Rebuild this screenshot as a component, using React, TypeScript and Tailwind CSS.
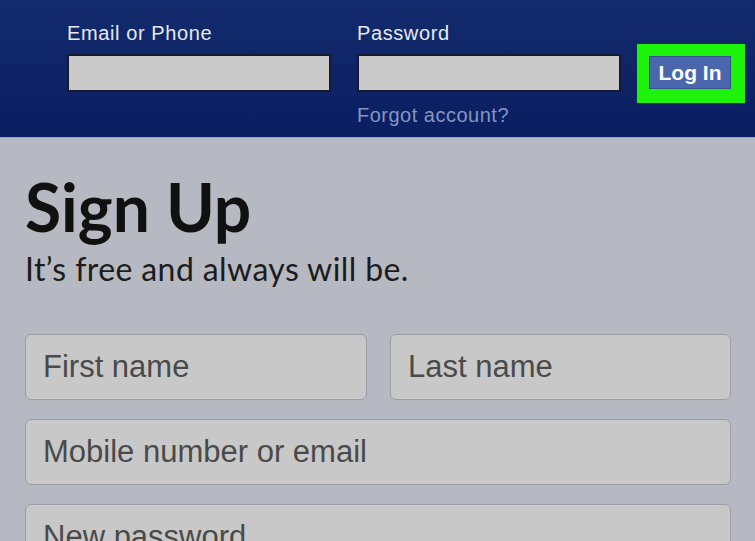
import React from 'react';

const HeaderField: React.FC<{ label: string; width: string; children?: React.ReactNode }> = ({ label, width, children }) => (
  <div className={`flex flex-col ${width}`}>
    <label className="h-[24px] text-[20px] leading-[24px] tracking-[0.6px] text-[#e6e9f2]">{label}</label>
    <div className="mt-[9px] h-[38px] w-full border-2 border-[#161a2e] bg-[#c9c9c9]" />
    {children}
  </div>
);

const SignupInput: React.FC<{ placeholder: string; className?: string }> = ({ placeholder, className = '' }) => (
  <input
    placeholder={placeholder}
    className={`h-[66px] rounded-[6px] border border-[#9a9da5] bg-[#c8c8c8] pl-[17px] text-[31px] text-[#3d3d3d] outline-none placeholder:text-[#4a4a4a] ${className}`}
  />
);

export default function App() {
  return (
    <div className="h-[541px] w-[755px] overflow-hidden bg-[#b6b9c1] font-['Liberation_Sans',Arial,sans-serif]">
      {/* top login bar */}
      <header className="flex h-[138px] items-start border-b border-[#9aa0b2] bg-gradient-to-b from-[#132b6d] to-[#0a1e61] pl-[67px] pt-[21px]">
        <HeaderField label="Email or Phone" width="w-[264px]" />
        <div className="ml-[26px]">
          <HeaderField label="Password" width="w-[264px]">
            <a className="mt-[11px] h-[24px] text-[20px] leading-[24px] tracking-[0.5px] text-[#8596c2]">Forgot account?</a>
          </HeaderField>
        </div>
        <div className="ml-[16px] mt-[23px] flex h-[59px] w-[108px] items-start bg-[#1df20a] pl-[12px] pt-[12px]">
          <button className="h-[33px] w-[82px] border border-[#35508f] bg-[#4a66ad] text-[21px] font-bold leading-[30px] text-white">
            Log In
          </button>
        </div>
      </header>

      {/* sign up form */}
      <main className="px-[25px]">
        <h1 className="mt-[36px] font-['Lato',sans-serif] text-[66px] font-bold leading-none text-[#111]">Sign Up</h1>
        <p className="mt-[13px] font-['Lato',sans-serif] text-[32px] leading-none tracking-[0.4px] text-[#1c1c1c]">It’s free and always will be.</p>

        <div className="mt-[49px] flex w-[706px] flex-col gap-[19px]">
          <div className="flex gap-[23px]">
            <SignupInput placeholder="First name" className="w-[342px]" />
            <SignupInput placeholder="Last name" className="w-[341px]" />
          </div>
          <SignupInput placeholder="Mobile number or email" className="w-[706px]" />
          <SignupInput placeholder="New password" className="w-[706px]" />
        </div>
      </main>
    </div>
  );
}
